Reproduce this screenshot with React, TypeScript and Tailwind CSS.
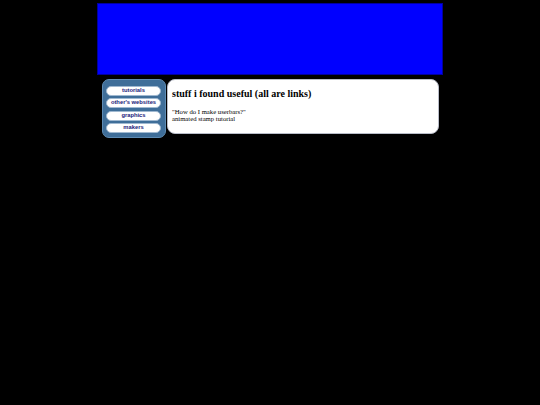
import React from "react";

export default function App() {
  const links = ["tutorials", "other's websites", "graphics", "makers"];
  return (
    <div className="min-h-[405px] w-full bg-black">
      <div className="mx-auto w-[346px] pt-[3px]">
        <div className="h-[72px] w-full border border-[#0000a0] bg-[#0000ff]" />
        <div className="mt-[4px] flex items-start">
          <div className="ml-[4.5px] box-border flex h-[59px] w-[64px] flex-col gap-[2.5px] rounded-[7px] border border-[#5f8cb4] bg-[#3f6e99] pl-[3.5px] pt-[5.5px]">
            {links.map((l) => (
              <a
                key={l}
                href="#"
                className="flex h-[10px] w-[55px] shrink-0 items-center justify-center rounded-full border-[0.5px] border-[#9fb8d0] bg-white text-[5.8px] font-bold leading-none text-[#1a1a7a] no-underline"
                style={{ fontFamily: '"Liberation Sans", Arial, sans-serif' }}
              >
                {l}
              </a>
            ))}
          </div>
          <div
            className="ml-[1.5px] box-border h-[55px] w-[272px] rounded-[8px] border border-[#b8bcc8] bg-white pl-[4px] pt-[8px] text-black"
            style={{ fontFamily: '"Liberation Serif", "Times New Roman", serif' }}
          >
            <div className="text-[10px] font-bold leading-[12px]">stuff i found useful (all are links)</div>
            <div className="mt-[7.5px] text-[6.7px] leading-[7px]">
              <div>"How do I make userbars?"</div>
              <div>animated stamp tutorial</div>
            </div>
          </div>
        </div>
      </div>
    </div>
  );
}
